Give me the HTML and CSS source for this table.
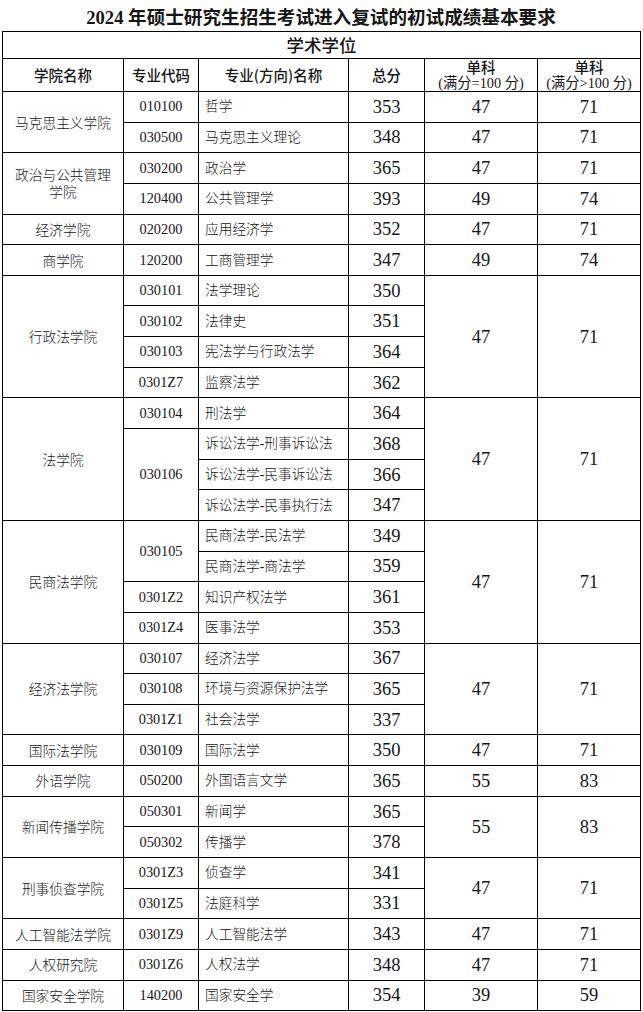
FILE: index.html
```html
<!DOCTYPE html>
<html lang="zh">
<head>
<meta charset="utf-8">
<link rel="stylesheet" href="styles.css">
</head>
<body>
<div class="page">
<h1 class="title">2024 年硕士研究生招生考试进入复试的初试成绩基本要求</h1>
<table class="grid">
<colgroup>
<col class="c1"><col class="c2"><col class="c3"><col class="c4"><col class="c5"><col class="c6">
</colgroup>
<tr class="cap"><td colspan="6">学术学位</td></tr>
<tr class="head">
<td>学院名称</td><td>专业代码</td><td>专业(方向)名称</td><td>总分</td>
<td><div>单科</div><div class="sub">(满分=100 分)</div></td>
<td><div>单科</div><div class="sub">(满分&gt;100 分)</div></td>
</tr>

<tr><td class="sch" rowspan="2">马克思主义学院</td><td class="code">010100</td><td class="maj">哲学</td><td class="num">353</td><td class="num">47</td><td class="num">71</td></tr>
<tr><td class="code">030500</td><td class="maj">马克思主义理论</td><td class="num">348</td><td class="num">47</td><td class="num">71</td></tr>

<tr><td class="sch" rowspan="2">政治与公共管理学院</td><td class="code">030200</td><td class="maj">政治学</td><td class="num">365</td><td class="num">47</td><td class="num">71</td></tr>
<tr><td class="code">120400</td><td class="maj">公共管理学</td><td class="num">393</td><td class="num">49</td><td class="num">74</td></tr>

<tr><td class="sch">经济学院</td><td class="code">020200</td><td class="maj">应用经济学</td><td class="num">352</td><td class="num">47</td><td class="num">71</td></tr>
<tr><td class="sch">商学院</td><td class="code">120200</td><td class="maj">工商管理学</td><td class="num">347</td><td class="num">49</td><td class="num">74</td></tr>

<tr><td class="sch" rowspan="4">行政法学院</td><td class="code">030101</td><td class="maj">法学理论</td><td class="num">350</td><td class="num" rowspan="4">47</td><td class="num" rowspan="4">71</td></tr>
<tr><td class="code">030102</td><td class="maj">法律史</td><td class="num">351</td></tr>
<tr><td class="code">030103</td><td class="maj">宪法学与行政法学</td><td class="num">364</td></tr>
<tr><td class="code">0301Z7</td><td class="maj">监察法学</td><td class="num">362</td></tr>

<tr><td class="sch" rowspan="4">法学院</td><td class="code">030104</td><td class="maj">刑法学</td><td class="num">364</td><td class="num" rowspan="4">47</td><td class="num" rowspan="4">71</td></tr>
<tr><td class="code" rowspan="3">030106</td><td class="maj">诉讼法学-刑事诉讼法</td><td class="num">368</td></tr>
<tr><td class="maj">诉讼法学-民事诉讼法</td><td class="num">366</td></tr>
<tr><td class="maj">诉讼法学-民事执行法</td><td class="num">347</td></tr>

<tr><td class="sch" rowspan="4">民商法学院</td><td class="code" rowspan="2">030105</td><td class="maj">民商法学-民法学</td><td class="num">349</td><td class="num" rowspan="4">47</td><td class="num" rowspan="4">71</td></tr>
<tr><td class="maj">民商法学-商法学</td><td class="num">359</td></tr>
<tr><td class="code">0301Z2</td><td class="maj">知识产权法学</td><td class="num">361</td></tr>
<tr><td class="code">0301Z4</td><td class="maj">医事法学</td><td class="num">353</td></tr>

<tr><td class="sch" rowspan="3">经济法学院</td><td class="code">030107</td><td class="maj">经济法学</td><td class="num">367</td><td class="num" rowspan="3">47</td><td class="num" rowspan="3">71</td></tr>
<tr><td class="code">030108</td><td class="maj">环境与资源保护法学</td><td class="num">365</td></tr>
<tr><td class="code">0301Z1</td><td class="maj">社会法学</td><td class="num">337</td></tr>

<tr><td class="sch">国际法学院</td><td class="code">030109</td><td class="maj">国际法学</td><td class="num">350</td><td class="num">47</td><td class="num">71</td></tr>
<tr><td class="sch">外语学院</td><td class="code">050200</td><td class="maj">外国语言文学</td><td class="num">365</td><td class="num">55</td><td class="num">83</td></tr>

<tr><td class="sch" rowspan="2">新闻传播学院</td><td class="code">050301</td><td class="maj">新闻学</td><td class="num">365</td><td class="num" rowspan="2">55</td><td class="num" rowspan="2">83</td></tr>
<tr><td class="code">050302</td><td class="maj">传播学</td><td class="num">378</td></tr>

<tr><td class="sch" rowspan="2">刑事侦查学院</td><td class="code">0301Z3</td><td class="maj">侦查学</td><td class="num">341</td><td class="num" rowspan="2">47</td><td class="num" rowspan="2">71</td></tr>
<tr><td class="code">0301Z5</td><td class="maj">法庭科学</td><td class="num">331</td></tr>

<tr><td class="sch">人工智能法学院</td><td class="code">0301Z9</td><td class="maj">人工智能法学</td><td class="num">343</td><td class="num">47</td><td class="num">71</td></tr>
<tr><td class="sch">人权研究院</td><td class="code">0301Z6</td><td class="maj">人权法学</td><td class="num">348</td><td class="num">47</td><td class="num">71</td></tr>
<tr><td class="sch">国家安全学院</td><td class="code">140200</td><td class="maj">国家安全学</td><td class="num">354</td><td class="num">39</td><td class="num">59</td></tr>
</table>
</div>
</body>
</html>
```

FILE: styles.css
```css
html, body {
  margin: 0;
  padding: 0;
  background: #fff;
}
.page {
  padding: 0 3px 0 2px;
  color: #161616;
  font-family: "Liberation Serif", "Noto Sans CJK SC", serif;
}
.title {
  margin: 0;
  height: 31px;
  line-height: 35px;
  text-align: center;
  font-size: 18.6px;
  font-weight: bold;
  font-family: "Liberation Serif", "Noto Sans CJK SC", serif;
}
.grid {
  width: 638px;
  border-collapse: collapse;
  table-layout: fixed;
}
.c1 { width: 121px; }
.c2 { width: 75px; }
.c3 { width: 150px; }
.c4 { width: 76px; }
.c5 { width: 113px; }
.c6 { width: 103px; }
.grid td {
  border: 1px solid #000;
  padding: 0 6px;
  text-align: center;
  vertical-align: middle;
  height: 29.65px;
  font-size: 14px;
  line-height: 17px;
}
.grid .cap td {
  height: 26px;
  font-family: "Noto Sans CJK SC", sans-serif;
  font-size: 17.5px;
  font-weight: 500;
  line-height: 20px;
}
.grid .head td {
  height: 32px;
  font-family: "Noto Sans CJK SC", sans-serif;
  font-size: 14.5px;
  font-weight: 500;
  line-height: 16px;
  padding: 0 2px;
}
.grid .head .sub {
  font-family: "Liberation Serif", "Noto Sans CJK SC", serif;
  font-weight: normal;
  font-size: 14.3px;
}
.grid td.sch {
  font-family: "Noto Sans CJK SC", sans-serif;
  font-size: 13.7px;
  font-weight: 300;
}
.grid td.code {
  font-family: "Liberation Serif", serif;
  font-size: 14.3px;
}
.grid td.maj {
  text-align: left;
  font-family: "Liberation Serif", "Noto Sans CJK SC", serif;
  font-size: 13.7px;
  font-weight: 300;
}
.grid td.num {
  font-family: "Liberation Serif", serif;
  font-size: 18.5px;
  line-height: 14px;
  padding-top: 0;
  padding-bottom: 0;
}
```
